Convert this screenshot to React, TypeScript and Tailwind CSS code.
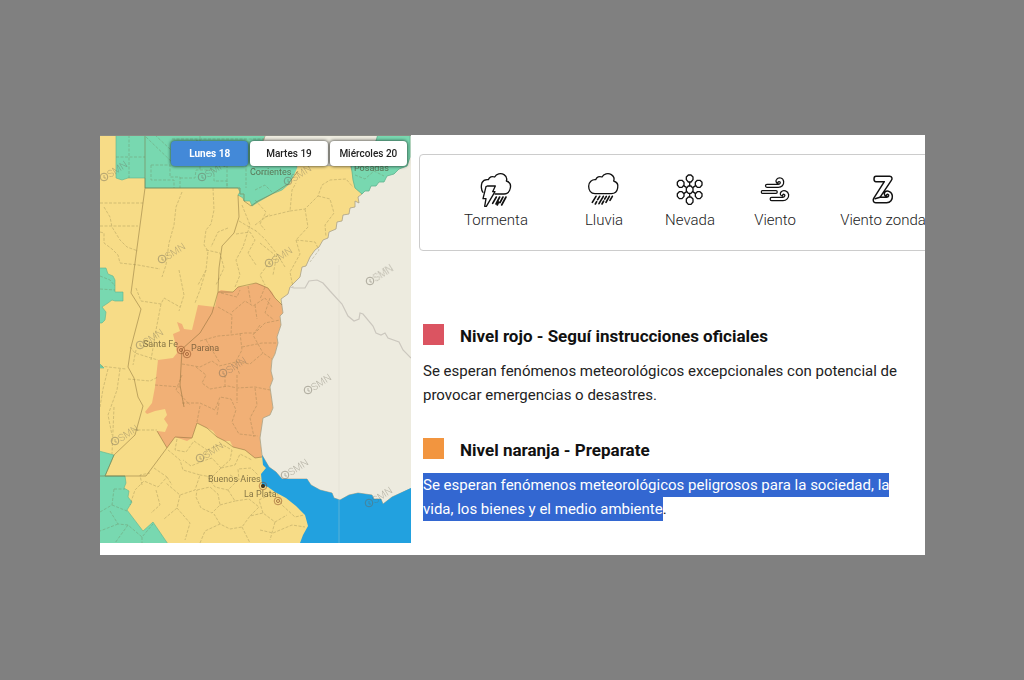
import React, { useState } from 'react';

const TABS = ['Lunes 18', 'Martes 19', 'Miércoles 20'];

// Department borders, drawn dashed
const DEPARTMENTS = [
  'M0 68H43 M0 91H38 M4 72L10 82L12 92L20 105L27 112L38 116 M0 97L4 98L4 108L12 114L18 120L20 128L38 130L60 134',
  'M51 30H70V42H80V53 M51 30V45H74V53 M80 43H95L96 35H114V46H127V53 M127 30V53 M146 20V53 M100 0V35',
  'M46 2L75 30 M55 0L85 28 M72 4H166 M96 5L130 25 M16 22H45 M29 0V43',
  'M82 57L76 72L74 90L69 108L66 130L62 142 M113 53L114 75L111 89L106 95L104 110L108 116L106 135L98 150 M128 93L118 97L111 112',
  'M36 153L41 166L61 169L64 163L80 172 M61 169L56 195L51 225 M79 135L84 160L79 176 M106 135L100 155L95 168',
  'M106 115L120 118L124 133L116 150 M136 99L150 97L155 105L148 118L156 130 M139 86L156 96 M143 112L136 125L140 140L135 152',
  'M155 65L166 77L160 89L165 95 M165 82L190 76L192 55L196 48 M190 76L205 74L218 61L222 50L230 45L246 44L253 52',
  'M205 74L208 92L196 105L200 119L190 137L193 152 M218 61L230 64L234 78L225 90L226 102 M155 95L165 104L177 119L185 132',
  'M196 105L215 107L219 115L210 127 M155 90L170 79 M160 108L175 120L160 140L165 150 M177 119L173 140 M142 70L150 90L143 112',
  'M118 172L132 180L131 200 M132 177L145 166L153 171L165 163L173 173 M100 206L118 201L131 200L145 198L155 198L165 188L180 185',
  'M140 198L142 215L135 228L140 240 M142 212L162 208L176 208 M82 229L100 232L112 226L119 231L136 227L150 229L163 218L172 224',
  'M96 232L106 240L102 248L110 254L128 251L137 253L155 252L170 255 M137 240V268 M125 240V252 M55 250L80 252',
  'M82 268L100 268L115 275L120 262L131 264L136 275L132 287L139 299L158 301 M119 268L117 280 M100 271L97 287 M155 253L157 270L150 283L154 302',
  'M148 151L151 169 M165 152L160 164 M155 170L157 184 M121 158L137 162L140 155 M160 190L153 200L163 218 M170 163L165 178L174 185 M82 240L76 255L90 270 M106 205L120 228',
  'M30 212L35 218L51 223L58 225 M0 231L26 234 M8 234L3 254L0 272 M20 234L17 255L8 280L12 300 M28 244L50 246L58 242 M36 215L33 230 M33 295L57 295 M14 272L12 319',
  'M68 315L80 325L83 335L100 340L95 355L80 360L66 348 M54 333L67 342L58 352L44 346L35 355L30 370 M42 350L40 340L50 338 M67 342L72 350',
  'M77 304L75 315L86 317L94 306L107 315L103 326L91 331L83 325 M107 315L121 309L132 315L130 325L121 333L112 323L103 326 M121 333L112 342L100 340',
  'M121 333L135 330L140 319L152 325 M130 340L139 345L138 334L151 333L158 340 M138 345L128 355L115 352L107 341 M128 355L135 366L149 364L159 372L150 381',
  'M97 355L110 352L118 359L120 370L112 378L101 373L96 362Z M80 360L77 373L64 384 M56 355L60 370L51 378 M77 373L90 388L85 405 M120 370L135 366',
  'M100 408L105 396L120 389L130 394L142 392L150 381L163 378L175 387L187 380 M120 389L114 379 M142 392L150 408 M163 378L159 365L173 358 M175 387L170 405 M177 358L182 370L195 382L204 380 M160 395L173 398L192 390L205 392',
  'M14 354L12 370L0 377 M14 354H25 M12 370L27 376 M10 376L18 389L28 390L42 402L53 389 M18 389L0 396 M28 390L15 408 M42 402V408',
  'M0 141L10 145L15 151 M0 154L15 155 M166 15L175 25L190 20 M155 55L165 50L172 57 M160 38L170 40 M255 40L265 44L274 36L284 41 M270 20L280 30L298 28 M290 10L295 22',
];

// Province borders, drawn solid
const PROVINCES = [
  'M45 0V53H140V59H144V66L151 71L158 66L172 59L188 49L198 36',
  'M45 53L31 158L41 174L31 212L28 232L34 243L38 262L43 271L35 300L14 320L5 341H46L75 302',
  'M138 60L139 82L134 98L122 111L119 133L118 157L112 178L100 198L82 214L80 250L84 272',
  'M0 341H25',
  'M118 157L133 157L138 152L156 148L168 153L175 163L182 170',
  'M57 296L67 313M75 302L92 303L97 288L107 293L117 302L125 306L133 312L145 315L155 323L162 322',
];

const WATERMARKS = [
  [4, 42], [62, 124], [102, 42], [188, 46], [169, 128], [270, 146], [208, 255],
  [40, 210], [123, 238], [15, 306], [100, 323], [185, 340], [269, 368],
];

const CITIES = [
  { name: 'Corrientes', x: 150, y: 40 },
  { name: 'Posadas', x: 254, y: 36 },
  { name: 'Santa Fe', x: 43, y: 212 },
  { name: 'Parana', x: 91, y: 216 },
  { name: 'Buenos Aires', x: 108, y: 347 },
  { name: 'La Plata', x: 144, y: 362 },
];

const MARKERS = [[81, 215], [87, 219], [163, 351], [178, 366]];

const AlertMap: React.FC = () => (
  <svg className="block w-full" viewBox="0 0 311 408" role="img" aria-label="Mapa de alertas">
    <rect width="311" height="408" fill="#f7dc87" />
    {/* Nivel verde */}
    <g fill="#78d8b0" stroke="#5fb48f" strokeWidth="0.6">
      <path d="M16 -1V43L22 45L28 43L45 43V53H138L140 57L138 60L143 63L144 66L150 66L152 71L158 67L172 59L182 55L190 48L198 36L198 -1Z" />
      <path d="M-1 133H6L8 139L13 141L15 145V157H23V166H15L12 165L8 168L2 172L6 177L5 185L2 188H-1Z" />
      <path d="M-1 228L4 233H-1Z" />
      <path d="M-1 316L14 320L5 341H25L26 348L24 353L29 356L28 362L32 367L27 375L43 396L53 387L68 409H-1Z" />
    </g>
    {/* Nivel naranja */}
    <path
      fill="#f1b076"
      d="M118 157L121 155L133 157L138 152L147 151L156 148L162 150L168 153L172 157L175 163L182 170L183 178L180 181L181 190L177 202L178 208L175 219L172 225L171 236L173 244L170 252L173 273L170 280L163 283L162 293L160 303L162 322L155 323L145 315L133 312L130 306L125 306L117 302L113 296L97 288L92 303L87 306L75 302L67 313L57 296L65 297L68 290L64 284L67 280L65 274L55 276L47 279L45 277L52 268L55 252L58 225L73 223L77 218L75 207L73 199L80 196L77 187L82 189L84 194L92 195L98 170L115 172Z"
    />
    {/* Uruguay y Brasil */}
    <path
      fill="#edebdf"
      stroke="#aaa188"
      strokeWidth="0.8"
      d="M166 -1L163 6L168 14L180 16L195 22L198 36L205 31H250L262 59L258 62L259 68L255 66L255 72L250 73L249 79L243 80L242 86L237 87L236 94L229 97L228 103L223 105L219 112L215 115L210 122L206 131L202 132L200 142L190 152L188 159L181 164L183 178L180 181L181 190L177 202L178 208L175 219L172 225L171 236L173 244L170 252L173 273L170 280L163 283L160 303L162 320L169 332L176 337L182 344H207L211 350L220 355L232 358L234 363L240 365L249 360L258 358L272 360L274 364L281 364L283 369L292 362L312 353V-1Z"
    />
    <path fill="#f7dc87" d="M190 48L194 40L198 31H250L254 45L261 58L240 70L200 70Z" />
    <path
      fill="#78d8b0"
      stroke="#5fb48f"
      strokeWidth="0.8"
      d="M278 -1L276 6L250 20L253 45L255 53L262 59L265 56L269 56L271 51L276 51L279 47L284 47L287 41L294 39L299 34L307 31L310 22V-1Z"
    />
    {/* Río de la Plata */}
    <path
      fill="#22a1df"
      d="M162 320L163 330L166 333L161 339L162 350L168 352L175 357L186 363L196 371L205 380L208 391L203 400L200 408H311V353L292 362L283 369L281 364H274L272 360L258 358L249 360L240 365L234 363L232 358L220 355L211 350L207 344H182L176 337L169 332Z"
    />
    <path
      fill="none"
      stroke="#cbc7be"
      strokeWidth="1.2"
      d="M190 152L194 153H205L209 146L217 145L223 148L230 156L242 169L248 181L254 186L259 184L260 178L263 179L273 191L276 198L281 200L285 198L288 203L299 207L303 215L311 223"
    />
    <path stroke="#d9d7cb" strokeWidth="0.6" opacity="0.5" d="M239 130V408" />
    <g fill="none" stroke="#6b6338" strokeWidth="0.8" strokeDasharray="3 1.5" opacity="0.32">
      {DEPARTMENTS.map((d) => (
        <path key={d} d={d} />
      ))}
    </g>
    <g fill="none" stroke="#7a6230" strokeWidth="1" opacity="0.45">
      {PROVINCES.map((d) => (
        <path key={d} d={d} />
      ))}
    </g>
    <g fill="none" stroke="#6b6658" opacity="0.5">
      {WATERMARKS.map(([x, y]) => (
        <g key={`${x}-${y}`}>
          <circle cx={x} cy={y} r="3.8" />
          <path d={`M${x} ${y - 2}V${y + 1}H${x + 2}`} strokeWidth="0.8" />
        </g>
      ))}
    </g>
    <g fill="#6b6658" opacity="0.42" fontFamily="Roboto, sans-serif" fontSize="10" fontWeight="300">
      {WATERMARKS.map(([x, y]) => (
        <text key={`${x}-${y}`} x={x + 6} y={y + 1} transform={`rotate(-33 ${x + 6} ${y + 1})`}>
          SMN
        </text>
      ))}
    </g>
    <g fill="none" stroke="#8a4b25" opacity="0.7">
      {MARKERS.map(([x, y]) => (
        <g key={`${x}-${y}`}>
          <circle cx={x} cy={y} r="3.8" strokeWidth="0.8" />
          <circle cx={x} cy={y} r="1.5" />
        </g>
      ))}
    </g>
    <circle cx="163" cy="351" r="2" fill="#3b3522" />
    <g fill="#4a4026" opacity="0.65" fontFamily="Roboto, sans-serif" fontSize="9">
      {CITIES.map((city) => (
        <text key={city.name} x={city.x} y={city.y}>
          {city.name}
        </text>
      ))}
    </g>
    <path stroke="#8b8b84" strokeWidth="1" d="M0 0.5H311" />
  </svg>
);

const StormIcon = () => (
  <svg className="size-9" viewBox="189 82 108 108" fill="none" stroke="#111" strokeWidth="4" strokeLinejoin="round" strokeLinecap="round" aria-hidden="true">
    <path d="M204 143C198 136 198 122 201 114C205 106 213 104 220 105C223 97 231 94 239 97C244 88 257 84 267 90C276 96 276 104 274 109C284 112 288 121 286 130C284 142 277 148 267 148H240" />
    <path d="M217 124H241L233 141H240L214 185H209L213 162H204L213 126Z" />
    <path strokeWidth="5" d="M244 157L233 176M254 157L243 178M264 157L255 174M273 157L260 181M251 172L247 181" />
  </svg>
);

const RainIcon = () => (
  <svg className="size-9" viewBox="513 82 108 108" fill="none" stroke="#111" strokeWidth="4" strokeLinejoin="round" strokeLinecap="round" aria-hidden="true">
    <path d="M540 147C527 147 521 136 521 125C521 112 531 104 542 105C545 97 553 94 561 97C566 88 579 84 589 90C598 96 598 104 596 109C606 112 610 121 608 130C606 142 599 147 589 147Z" />
    <path strokeWidth="5" d="M543 155L532 173M554 155L548 165M545 171L541 178M565 155L552 177M574 155L569 163M566 169L561 178M583 155L573 173M592 155L585 167" />
  </svg>
);

const SnowIcon = () => (
  <svg className="size-9" viewBox="21 82 108 108" fill="none" stroke="#111" strokeWidth="4" strokeLinejoin="round" aria-hidden="true">
    <path d="M74 124V112M74 146V156M65 129L56 123M83 129L92 123M65 141L56 147M83 141L92 147" />
    <path d="M70 91H78L84 97V105L78 112H70L64 105V97Z M70 157H78L84 163V172L78 179H70L64 172V163Z M70 124H78L84 131V139L78 146H70L64 139V131Z" />
    <path d="M43 107H51L57 113V121L51 128H43L37 121V113Z M97 107H105L111 113V121L105 128H97L91 121V113Z M43 141H51L57 147V155L51 162H43L37 155V147Z M97 141H105L111 147V155L105 162H97L91 155V147Z" />
  </svg>
);

const WindIcon = () => (
  <svg className="size-9" viewBox="276 82 108 108" fill="none" stroke="#111" strokeWidth="3.8" strokeLinejoin="round" strokeLinecap="round" aria-hidden="true">
    <path d="M306 119H340C346 119 348 112 343 111C340 110 338 113 339 116C333 115 331 108 335 104C341 96 355 99 356 111C357 121 350 128 340 128H306C300 128 300 119 306 119Z" />
    <path d="M292 138H333C338 138 338 146 333 146H292C288 146 288 138 292 138Z" />
    <path d="M320 158H353C359 158 362 151 357 149C354 148 352 151 353 154C346 154 344 147 348 142C355 134 369 138 371 150C372 160 364 168 354 168H320C314 168 314 158 320 158Z" />
  </svg>
);

const ZondaIcon = () => (
  <svg className="size-9" viewBox="600 82 108 108" fill="none" stroke="#111" strokeWidth="4.4" strokeLinejoin="round" strokeLinecap="round" aria-hidden="true">
    <path d="M633 95H674C681 95 683 102 679 107L645 158H665C671 158 673 151 669 149C666 148 663 151 665 154C658 154 656 147 660 142C667 136 681 141 682 154C683 165 676 174 665 174H632C625 174 623 167 626 161L658 111H633C625 111 625 95 633 95Z" />
    <path d="M630 162L645 158" />
  </svg>
);

const PHENOMENA = [
  { label: 'Tormenta', Icon: StormIcon },
  { label: 'Lluvia', Icon: RainIcon },
  { label: 'Nevada', Icon: SnowIcon },
  { label: 'Viento', Icon: WindIcon },
  { label: 'Viento zonda', Icon: ZondaIcon },
];

interface LevelProps {
  color: string;
  title: string;
  children: React.ReactNode;
}

const Level: React.FC<LevelProps> = ({ color, title, children }) => (
  <section>
    <div className="flex items-start gap-4">
      <span className={`size-[21px] ${color}`} />
      <h2 className="text-[17px] leading-6 font-bold text-[#111]">{title}</h2>
    </div>
    <p className="mt-[11px] text-[15px] leading-6 text-[#222]">{children}</p>
  </section>
);

const App: React.FC = () => {
  const [selected, setSelected] = useState(0);

  return (
    <div className="min-h-screen bg-[#808080] pt-[135px] pr-[99px] pl-[100px] font-['Roboto',sans-serif]">
      <main className="flex overflow-hidden bg-white">
        <div className="relative w-[311px] shrink-0">
          <AlertMap />
          {/* Selector de día */}
          <div className="absolute top-1.5 right-1 left-[71px] flex gap-0.5">
            {TABS.map((tab, index) => (
              <button
                key={tab}
                type="button"
                onClick={() => setSelected(index)}
                className={`h-[25px] flex-1 rounded text-[10px] whitespace-nowrap shadow-[0_0_3px_1px_rgba(0,0,0,0.5)] ${
                  index === selected ? 'bg-[#4389d8] font-bold text-white' : 'bg-white font-medium text-[#222]'
                }`}
              >
                {tab}
              </button>
            ))}
          </div>
        </div>

        <div className="min-w-0 flex-1 overflow-hidden pt-[19px] pb-[34px] pl-2">
          <ul className="grid w-[560px] grid-cols-[108px_108px_64px_106px_110px] rounded border border-[#ccc] pt-[17px] pb-[18px] pl-[22px]">
            {PHENOMENA.map(({ label, Icon }) => (
              <li key={label} className="flex flex-col items-center">
                <Icon />
                <span className="text-[15px] leading-6 font-light whitespace-nowrap text-[#222]">{label}</span>
              </li>
            ))}
          </ul>

          <div className="mt-[73px] flex flex-col gap-[31px] pl-1">
            <Level color="bg-[#db5461]" title="Nivel rojo - Seguí instrucciones oficiales">
              Se esperan fenómenos meteorológicos excepcionales con potencial de
              <br />
              provocar emergencias o desastres.
            </Level>
            <Level color="bg-[#f2953f]" title="Nivel naranja - Preparate">
              <mark className="bg-[#3367d1] box-decoration-clone py-[3px] text-white">
                Se esperan fenómenos meteorológicos peligrosos para la sociedad, la
                <br />
                vida, los bienes y el medio ambiente
              </mark>
              .
            </Level>
          </div>
        </div>
      </main>
    </div>
  );
};

export default App;
